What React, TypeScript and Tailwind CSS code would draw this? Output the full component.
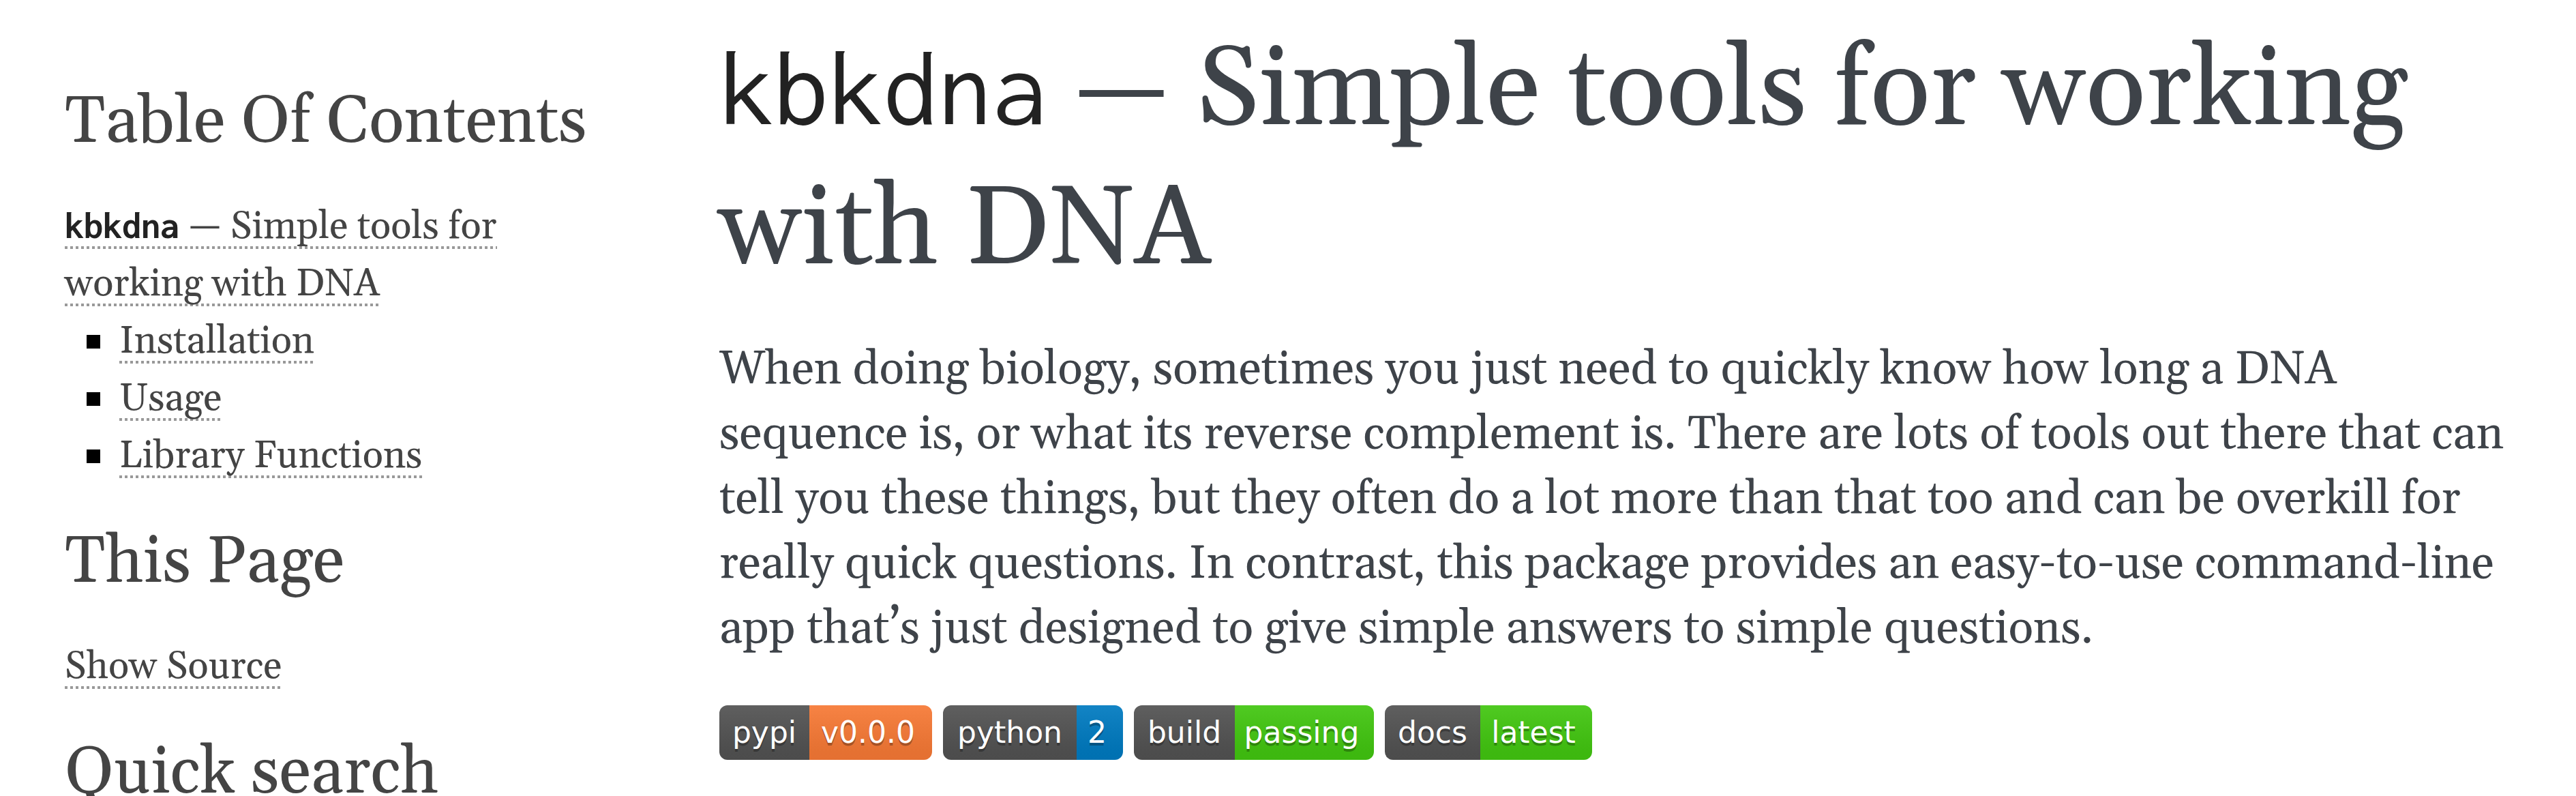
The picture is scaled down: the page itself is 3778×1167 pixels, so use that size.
import type { ReactNode } from "react";

type BadgeProps = {
  label: string;
  value: string;
  labelClass: string;
  valueClass: string;
};

function Badge({ label, value, labelClass, valueClass }: BadgeProps) {
  const shade =
    "flex h-20 items-center justify-center bg-linear-to-b from-[#bbb]/10 to-black/10";
  return (
    <a
      href="#"
      className="flex overflow-hidden rounded-xl font-['DejaVu_Sans',sans-serif] text-[44px] leading-[80px] text-white [text-shadow:0_4px_0_rgb(1_1_1/0.3)]"
    >
      <span className={`${shade} bg-[#555] ${labelClass}`}>{label}</span>
      <span className={`${shade} pr-2 ${valueClass}`}>{value}</span>
    </a>
  );
}

// Square-dotted rule drawn just under the baseline of every wrapped line.
function SideLink({ children }: { children: ReactNode }) {
  return (
    <a
      href="#"
      className="box-decoration-clone bg-[repeating-linear-gradient(90deg,#999_0_4px,transparent_4px_8px)] bg-[length:100%_4px] bg-[position:0_calc(100%-3px)] bg-no-repeat"
    >
      {children}
    </a>
  );
}

function SideHeading({ children }: { children: ReactNode }) {
  return <h3 className="text-[96px] leading-[116px]">{children}</h3>;
}

const sections = ["Installation", "Usage", "Library Functions"];

export default function App() {
  return (
    <div className="flex h-screen overflow-hidden bg-white font-[Gelasio,Georgia,serif]">
      <aside className="w-[1055px] shrink-0 pt-[122px] pr-[160px] pl-[95px] text-[56px] leading-[84px] text-[#444]">
        <SideHeading>Table Of Contents</SideHeading>
        <div className="mt-[53px] mb-[56px]">
          <p>
            <SideLink>
              <code className="font-[Inconsolata,'DejaVu_Sans_Mono',monospace] text-[56px] leading-none font-bold text-[#222]">
                kbkdna
              </code>{" "}
              — Simple tools for working with DNA
            </SideLink>
          </p>
          <ul className="pl-8">
            {sections.map((s) => (
              <li
                key={s}
                className="flex items-center gap-7 before:size-5 before:bg-black"
              >
                <span>
                  <SideLink>{s}</SideLink>
                </span>
              </li>
            ))}
          </ul>
        </div>
        <SideHeading>This Page</SideHeading>
        <p className="mt-[53px] mb-[56px]">
          <SideLink>Show Source</SideLink>
        </p>
        <SideHeading>Quick search</SideHeading>
      </aside>
      <main className="min-w-0 flex-1 pt-8 pr-[95px] text-[#3e4349]">
        <h1 className="text-[164px] leading-[204px]">
          <code className="font-[Inconsolata,'DejaVu_Sans_Mono',monospace] text-[160px] leading-none text-[#222]">
            kbkdna
          </code>{" "}
          — Simple tools for working with DNA
        </h1>
        <p className="mt-[55px] text-[68px] leading-[95px]">
          When doing biology, sometimes you just need to quickly know how long a
          DNA sequence is, or what its reverse complement is. There are lots of
          tools out there that can tell you these things, but they often do a
          lot more than that too and can be overkill for really quick questions.
          In contrast, this package provides an easy-to-use command-line app
          that’s just designed to give simple answers to simple questions.
        </p>
        <div className="mt-16 flex flex-wrap gap-4">
          <Badge label="pypi" value="v0.0.0" labelClass="w-[132px]" valueClass="w-[180px] bg-[#fe7d37]" />
          <Badge label="python" value="2" labelClass="w-[196px]" valueClass="w-[68px] bg-[#007ec6]" />
          <Badge label="build" value="passing" labelClass="w-[148px]" valueClass="w-[204px] bg-[#4c1]" />
          <Badge label="docs" value="latest" labelClass="w-[140px]" valueClass="w-[164px] bg-[#4c1]" />
        </div>
      </main>
    </div>
  );
}
